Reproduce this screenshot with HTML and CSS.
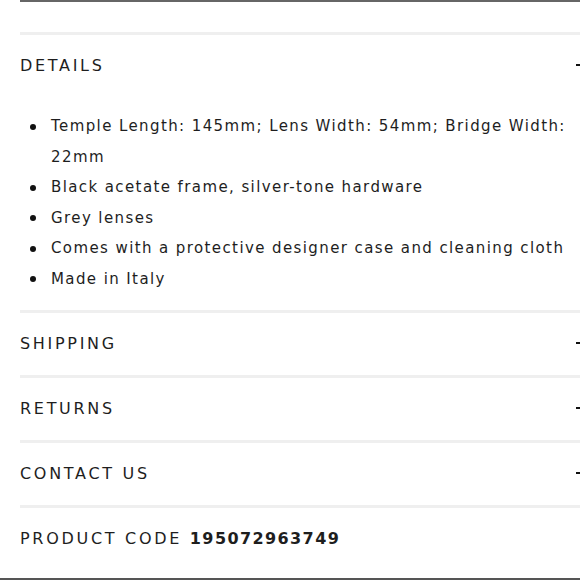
FILE: index.html
```html
<!DOCTYPE html>
<html>
<head>
<meta charset="utf-8">
<link rel="stylesheet" href="styles.css">
</head>
<body>
<div class="page">
  <div class="top-rule"></div>
  <div class="spacer"></div>
  <section class="acc">
    <div class="acc-head"><span class="acc-title">Details</span><span class="minus"></span></div>
    <ul class="details">
      <li>Temple Length: 145mm; Lens Width: 54mm; Bridge Width: 22mm</li>
      <li>Black acetate frame, silver-tone hardware</li>
      <li>Grey lenses</li>
      <li>Comes with a protective designer case and cleaning cloth</li>
      <li>Made in Italy</li>
    </ul>
  </section>
  <section class="acc">
    <div class="acc-head"><span class="acc-title">Shipping</span><span class="minus"></span></div>
  </section>
  <section class="acc">
    <div class="acc-head"><span class="acc-title">Returns</span><span class="minus"></span></div>
  </section>
  <section class="acc">
    <div class="acc-head"><span class="acc-title">Contact Us</span><span class="minus"></span></div>
  </section>
  <section class="acc code">
    <div class="code-row"><span class="acc-title">Product Code <b>195072963749</b></span></div>
  </section>
</div>
<div class="bottom-rule"></div>
</body>
</html>
```
FILE: styles.css
```css
html, body {
  margin: 0;
  padding: 0;
  background: #fff;
  overflow: hidden;
  height: 580px;
  position: relative;
}
body {
  font-family: "DejaVu Sans", "Open Sans", sans-serif;
  color: #1e1e1e;
}
.page {
  margin-left: 20px;
  width: 562px;
}
.top-rule {
  height: 2px;
  background: #666;
}
.spacer {
  height: 30px;
}
.acc {
  border-top: 3px solid #efefef;
}
.acc-head {
  height: 60px;
  padding-bottom: 2px;
  display: flex;
  align-items: center;
  justify-content: space-between;
}
.acc-title {
  font-size: 16px;
  letter-spacing: 2.7px;
  text-transform: uppercase;
  color: #1e1e1e;
}
.acc-title b {
  font-weight: bold;
  letter-spacing: 1.4px;
}
.minus {
  width: 6px;
  height: 2px;
  background: #111;
}
.details {
  margin: 14px 0 15.5px 0;
  padding: 0 0 0 31px;
  list-style: none;
  font-size: 15px;
  line-height: 30.6px;
  letter-spacing: 1.4px;
}
.details li {
  position: relative;
}
.details li::before {
  content: "";
  position: absolute;
  left: -21px;
  top: 12.5px;
  width: 6px;
  height: 6px;
  border-radius: 50%;
  background: #111;
}
.code-row {
  height: 60px;
  display: flex;
  align-items: center;
}
.bottom-rule {
  position: absolute;
  left: 0;
  right: 0;
  bottom: 0;
  height: 2px;
  background: #555;
}
```
